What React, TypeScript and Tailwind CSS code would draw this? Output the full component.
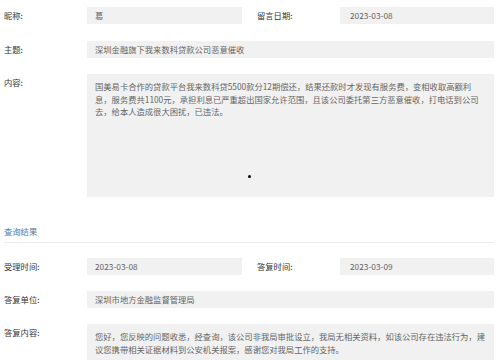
import React from 'react';

const font = { fontFamily: '"Noto Sans CJK SC", "Noto Sans", sans-serif' };

function Label({ children, className = '' }: { children: React.ReactNode; className?: string }) {
  return <div className={`w-[83px] shrink-0 leading-[17px] text-[#333] ${className}`}>{children}</div>;
}

function Value({ children, className = '' }: { children: React.ReactNode; className?: string }) {
  return (
    <div className={`h-[17px] leading-[17px] bg-[#f1f1f1] pl-[8px] text-[#666] whitespace-nowrap ${className}`}>
      {children}
    </div>
  );
}

export default function App() {
  return (
    <div className="w-[499px] h-[360px] overflow-hidden bg-white text-[8.3px] pl-[4px] pr-[5px] pt-[7px]" style={font}>
      <div className="flex">
        <Label>昵称:</Label>
        <Value className="w-[155px]">葛</Value>
        <div className="w-[15px]" />
        <Label className="w-[82px]">留言日期:</Label>
        <Value className="flex-1 pl-[10px]">2023-03-08</Value>
      </div>

      <div className="flex mt-[17px]">
        <Label>主题:</Label>
        <Value className="flex-1">深圳金融旗下我来数科贷款公司恶意催收</Value>
      </div>

      <div className="flex mt-[16px]">
        <Label>内容:</Label>
        <div className="relative flex-1 h-[123px] bg-[#f1f1f1] pl-[8px] pt-[6px] leading-[12.5px] text-[#666] whitespace-nowrap">
          国美易卡合作的贷款平台我来数科贷5500款分12期偿还，结果还款时才发现有服务费，变相收取高额利
          <br />
          息，服务费共1100元，承担利息已严重超出国家允许范围，且该公司委托第三方恶意催收，打电话到公司
          <br />
          去，给本人造成很大困扰，已违法。
          <span className="absolute left-[161px] top-[101px] w-[3px] h-[3px] rounded-full bg-black" />
        </div>
      </div>

      <div className="mt-[23px] h-[23px] leading-[23px] border-b border-[#ececec] text-[#4f78a8]">查询结果</div>

      <div className="flex mt-[15px]">
        <Label>受理时间:</Label>
        <Value className="w-[155px]">2023-03-08</Value>
        <div className="w-[15px]" />
        <Label className="w-[82px]">答复时间:</Label>
        <Value className="flex-1 pl-[10px]">2023-03-09</Value>
      </div>

      <div className="flex mt-[16px]">
        <Label>答复单位:</Label>
        <Value className="flex-1">深圳市地方金融监督管理局</Value>
      </div>

      <div className="flex mt-[16px]">
        <Label>答复内容:</Label>
        <div className="flex-1 h-[50px] bg-[#f1f1f1] pl-[8px] pt-[6px] leading-[12.5px] text-[#666] whitespace-nowrap">
          您好，您反映的问题收悉，经查询，该公司非我局审批设立，我局无相关资料，如该公司存在违法行为，建
          <br />
          议您携带相关证据材料到公安机关报案，感谢您对我局工作的支持。
        </div>
      </div>
    </div>
  );
}
